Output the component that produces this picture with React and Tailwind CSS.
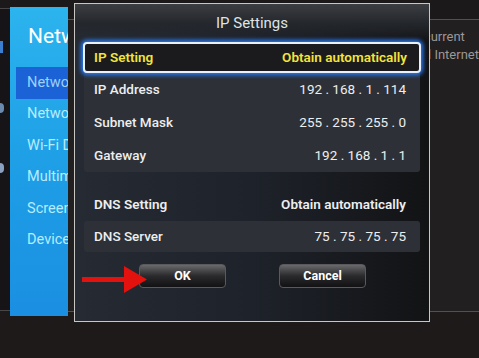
export default function App() {
  const menu = ["Network Status", "Network Settings", "Wi-Fi Direct", "Multimedia Device", "Screen Mirroring", "Device Name"];
  return (
    <div className="relative w-[479px] h-[358px] overflow-hidden bg-gradient-to-b from-[#1b191a] to-[#1f1a1a]" style={{ fontFamily: "Roboto, 'Open Sans', sans-serif" }}>
      {/* background layer */}
      <div className="flex h-full">
        <div className="w-[11px] mt-[8px] h-[303px] border-t border-b border-[#4a4648] bg-[#161416] flex flex-col gap-[50px] pt-[32px]">
          <div className="w-[3px] h-[12px] bg-[#3a7fd0]" />
          <div className="w-[4px] h-[10px] bg-[#6a8ab0] rounded-r-full" />
          <div className="w-[4px] h-[10px] bg-[#8aa0c0] rounded-r-full" />
        </div>
        <div className="mt-[7px] h-[309px] w-[63px] bg-gradient-to-b from-[#2cb4ee] via-[#1e9fe6] to-[#1b8fe2] flex flex-col overflow-hidden">
          <div className="h-[60px] pl-[18px] pt-[14px] text-[21px] leading-[30px] text-white whitespace-nowrap">Network</div>
          <div className="flex flex-col">
            {menu.map((m, i) => (
              <div key={m} className={`h-[31.5px] flex items-center ml-[6px] pl-[11px] text-[14.5px] whitespace-nowrap ${i === 0 ? "bg-[#1a62d6] text-[#9fd0f8]" : "text-[#b6ecff]"}`}>
                {m}
              </div>
            ))}
          </div>
        </div>
        <div className="flex-1 pt-[19px]">
          <div className="h-[293px] border-t border-b border-[#55504f] bg-[#221f20] pl-[356px] pt-[8px] text-[13px] leading-[18px] text-[#9a9898] whitespace-nowrap overflow-hidden">
            <div>current</div>
            <div>d Internet</div>
          </div>
        </div>
      </div>

      {/* dialog */}
      <div className="absolute left-[74px] top-[3px] w-[356px] h-[319px] border border-[#c9c7c4] bg-gradient-to-r from-[#262b33] via-[#1e222a] to-[#121315] flex flex-col px-[9px]">
        <div className="h-[38px] -mx-[9px] px-[9px] bg-gradient-to-b from-[#3c3e42] via-[#24272c] to-transparent flex items-center justify-center text-[15px] text-[#dfe3e6]">
          IP Settings
        </div>
        <div className="bg-[#2d3137] rounded-[3px] flex flex-col">
          <div className="h-[31px] -mx-[1px] rounded-[4px] border-2 border-[#e8f2ff] bg-[#1b1b1d] shadow-[0_0_4px_2px_#2a7fff] flex items-center justify-between pl-[9px] pr-[12px] text-[13.5px] font-semibold text-[#f3e43c]">
            <span>IP Setting</span>
            <span>Obtain automatically</span>
          </div>
          {[
            ["IP Address", "192 . 168 . 1 . 114"],
            ["Subnet Mask", "255 . 255 . 255 . 0"],
            ["Gateway", "192 . 168 . 1 . 1"],
          ].map(([k, v]) => (
            <div key={k} className="h-[33px] flex items-center justify-between pl-[10px] pr-[14px] text-[13.5px] text-[#eceef0]">
              <span className="font-medium">{k}</span>
              <span>{v}</span>
            </div>
          ))}
        </div>
        <div className="mt-[16px] h-[33px] flex items-center justify-between pl-[10px] pr-[14px] text-[13.5px] font-semibold text-[#eceef0]">
          <span>DNS Setting</span>
          <span>Obtain automatically</span>
        </div>
        <div className="h-[31px] bg-[#2d3137] rounded-[3px] flex items-center justify-between pl-[10px] pr-[14px] text-[13.5px] text-[#eceef0]">
          <span className="font-medium">DNS Server</span>
          <span>75 . 75 . 75 . 75</span>
        </div>
        <div className="mt-[12px] flex gap-[53px] pl-[55px]">
          <div className="w-[87px] h-[24px] rounded-[4px] border border-[#5a5a5c] bg-gradient-to-b from-[#6a6a6c] via-[#2a2a2c] to-[#121214] flex items-center justify-center text-[12.5px] font-bold text-white">OK</div>
          <div className="w-[87px] h-[24px] rounded-[4px] border border-[#5a5a5c] bg-gradient-to-b from-[#6a6a6c] via-[#2a2a2c] to-[#121214] flex items-center justify-center text-[12.5px] font-bold text-white">Cancel</div>
        </div>
      </div>

      {/* red arrow */}
      <svg className="absolute left-[80px] top-[265px]" width="70" height="30" viewBox="0 0 70 30">
        <rect x="2" y="12" width="44" height="5" fill="#e3120f" />
        <polygon points="44,1 67,14.5 44,28" fill="#e3120f" />
      </svg>
    </div>
  );
}
